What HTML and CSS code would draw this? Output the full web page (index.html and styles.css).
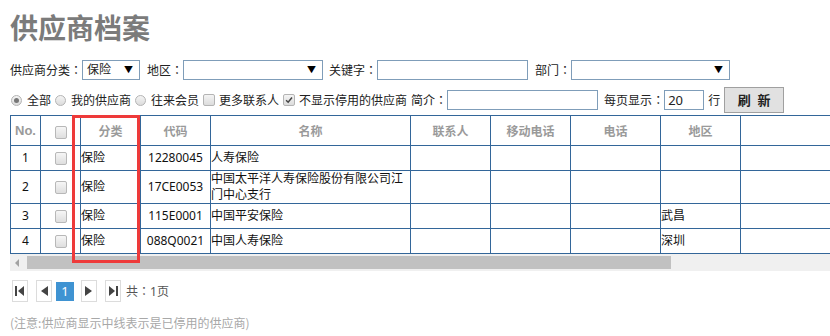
FILE: index.html
```html
<!DOCTYPE html>
<html>
<head>
  <meta charset="utf-8">
  <title>供应商档案</title>
  <link rel="stylesheet" href="styles.css">
</head>
<body>
  <div class="page">
    <h1 class="title">供应商档案</h1>

    <div class="filters">
      <span class="label">供应商分类<span class="colon">：</span></span>
      <span class="select sel-type">保险<i class="arrow">▼</i></span>
      <span class="label">地区<span class="colon">：</span></span>
      <span class="select sel-area"><i class="arrow">▼</i></span>
      <span class="label">关键字<span class="colon">：</span></span>
      <span class="input in-key"></span>
      <span class="label">部门<span class="colon">：</span></span>
      <span class="select sel-dept"><i class="arrow">▼</i></span>
    </div>

    <div class="filters row2">
      <span class="radio on first"></span><span class="opt">全部</span>
      <span class="radio"></span><span class="opt">我的供应商</span>
      <span class="radio"></span><span class="opt">往来会员</span>
      <span class="check"></span><span class="opt">更多联系人</span>
      <span class="check on"><svg viewBox="0 0 12 12" width="12" height="12"><path d="M2.5 6.2 L5 8.6 L9.6 3" fill="none" stroke="#444" stroke-width="1.8"/></svg></span><span class="opt">不显示停用的供应商</span>
      <span class="label">简介<span class="colon">：</span></span>
      <span class="input in-intro"></span>
      <span class="label">每页显示<span class="colon">：</span></span>
      <span class="input in-size">20</span>
      <span class="label">行</span>
      <span class="btn">刷 新</span>
    </div>

    <div class="grid-wrap">
      <div class="grid-scroll">
        <table class="grid">
          <colgroup>
            <col style="width:30px"><col style="width:40px"><col style="width:60px"><col style="width:70px"><col style="width:200px">
            <col style="width:80px"><col style="width:80px"><col style="width:90px"><col style="width:80px"><col style="width:160px">
          </colgroup>
          <tr class="head">
            <th class="no">No.</th>
            <th><span class="box"></span></th>
            <th>分类</th>
            <th>代码</th>
            <th>名称</th>
            <th>联系人</th>
            <th>移动电话</th>
            <th>电话</th>
            <th>地区</th>
            <th></th>
          </tr>
          <tr class="r25">
            <td class="c">1</td><td class="c"><span class="box"></span></td><td>保险</td><td class="c code">12280045</td><td>人寿保险</td><td></td><td></td><td></td><td></td><td></td>
          </tr>
          <tr class="r33">
            <td class="c">2</td><td class="c"><span class="box"></span></td><td>保险</td><td class="c code">17CE0053</td><td>中国太平洋人寿保险股份有限公司江门中心支行</td><td></td><td></td><td></td><td></td><td></td>
          </tr>
          <tr class="r25">
            <td class="c">3</td><td class="c"><span class="box"></span></td><td>保险</td><td class="c code">115E0001</td><td>中国平安保险</td><td></td><td></td><td></td><td>武昌</td><td></td>
          </tr>
          <tr class="r25">
            <td class="c">4</td><td class="c"><span class="box"></span></td><td>保险</td><td class="c code">088Q0021</td><td>中国人寿保险</td><td></td><td></td><td></td><td>深圳</td><td></td>
          </tr>
        </table>
      </div>
      <div class="hscroll">
        <span class="hs-arrow"></span>
        <span class="hs-thumb"></span>
      </div>
      <div class="mark"></div>
    </div>

    <div class="pager">
      <span class="pbtn p-first"><svg viewBox="0 0 14 20" width="14" height="20"><rect x="2" y="5" width="2" height="10" fill="#444"/><path d="M11 5 L5 10 L11 15 Z" fill="#444"/></svg></span>
      <span class="pbtn p-prev"><svg viewBox="0 0 14 20" width="14" height="20"><path d="M11 5 L4 10 L11 15 Z" fill="#444"/></svg></span>
      <span class="pcur">1</span>
      <span class="pbtn p-next"><svg viewBox="0 0 14 20" width="14" height="20"><path d="M3 5 L10 10 L3 15 Z" fill="#444"/></svg></span>
      <span class="pbtn p-last"><svg viewBox="0 0 14 20" width="14" height="20"><path d="M3 5 L9 10 L3 15 Z" fill="#444"/><rect x="10" y="5" width="2" height="10" fill="#444"/></svg></span>
      <span class="ptotal">共<span class="colon">：</span>1页</span>
    </div>

    <p class="note">(注意:供应商显示中线表示是已停用的供应商)</p>
  </div>
</body>
</html>
```

FILE: styles.css
```css
body {
  margin: 0;
  background: #fff;
  font-family: "Noto Sans", "Noto Sans CJK SC", sans-serif;
  font-size: 12px;
  color: #222;
}

.page {
  padding: 9px 0 0 10px;
  width: 820px;
}

.title {
  margin: 0;
  font-family: "Noto Sans CJK SC", sans-serif;
  font-size: 28px;
  line-height: 36px;
  font-weight: bold;
  color: #7b7b7b;
}

.filters {
  display: flex;
  align-items: center;
  height: 20px;
  margin-top: 15px;
  white-space: nowrap;
}

.row2 {
  margin-top: 10px;
}

.colon {
  font-family: "Noto Sans CJK TC", sans-serif;
}

.select,
.input {
  position: relative;
  box-sizing: border-box;
  height: 20px;
  border: 1px solid #7f9db9;
  background: #fff;
  line-height: 18px;
  padding-left: 4px;
  margin-right: 7px;
}

.arrow {
  position: absolute;
  right: 6px;
  top: 0;
  font-style: normal;
  font-size: 9px;
  color: #000;
}

.sel-type { width: 58px; }
.sel-area { width: 140px; margin-right: 6px; }
.in-key { width: 151px; }
.sel-dept { width: 159px; }

.radio {
  box-sizing: border-box;
  width: 11px;
  height: 11px;
  border-radius: 50%;
  border: 1px solid #b4b4b4;
  background: linear-gradient(#f4f4f4, #dcdcdc);
  margin-right: 5px;
  position: relative;
}

.radio.first {
  margin-left: 1px;
}

.radio.on::after {
  content: "";
  position: absolute;
  left: 2px;
  top: 2px;
  width: 5px;
  height: 5px;
  border-radius: 50%;
  background: #777;
}

.check {
  box-sizing: border-box;
  width: 12px;
  height: 12px;
  border: 1px solid #b4b4b4;
  border-radius: 2px;
  background: linear-gradient(#f4f4f4, #dcdcdc);
  margin-right: 4px;
  display: flex;
  align-items: center;
  justify-content: center;
}

.check svg {
  display: block;
}

.opt {
  margin-right: 4px;
}

.in-intro { width: 151px; margin-right: 6px; }
.in-size { width: 40px; margin-right: 4px; padding-left: 3px; font-size: 13px; }

.btn {
  box-sizing: border-box;
  width: 60px;
  height: 26px;
  margin-left: 4px;
  border: 1px solid #a0a0a0;
  background: #e1e1e1;
  text-align: center;
  line-height: 24px;
  font-family: "Noto Sans CJK SC", sans-serif;
  font-size: 13px;
  font-weight: bold;
  word-spacing: 4px;
  color: #222;
}

.grid-wrap {
  position: relative;
  margin-top: 5px;
}

.grid-scroll {
  overflow: hidden;
  width: 820px;
}

.grid {
  border-collapse: collapse;
  table-layout: fixed;
  width: 890px;
}

.grid th,
.grid td {
  border: 1px solid #336699;
  padding: 0;
  overflow: hidden;
}

.grid th {
  color: #9a9a9a;
  font-weight: bold;
  font-family: "Noto Sans CJK SC", sans-serif;
  font-size: 12px;
  text-align: center;
}

.grid th.no {
  font-family: "Liberation Sans", sans-serif;
  font-size: 13px;
}

.head { height: 30px; }
.r25 { height: 25px; }
.r33 { height: 33px; }

.grid td {
  line-height: 16px;
  color: #111;
}

.grid td.c {
  text-align: center;
}

.box {
  display: inline-block;
  vertical-align: middle;
  box-sizing: border-box;
  width: 12px;
  height: 13px;
  border: 1px solid #b8b8b8;
  border-radius: 2px;
  background: linear-gradient(#f6f6f6, #dedede);
}

.hscroll {
  position: relative;
  width: 820px;
  height: 17px;
  background: #f0f0f0;
}

.hs-arrow {
  position: absolute;
  left: 5px;
  top: 5px;
  border-right: 4px solid #a3a3a3;
  border-top: 4px solid transparent;
  border-bottom: 4px solid transparent;
}

.hs-thumb {
  position: absolute;
  left: 17px;
  top: 2px;
  width: 644px;
  height: 13px;
  background: #c1c1c1;
}

.mark {
  position: absolute;
  left: 62px;
  top: 0;
  width: 62px;
  height: 142px;
  border: 3px solid #ee3a3a;
}

.pager {
  display: flex;
  align-items: center;
  margin-top: 9px;
  margin-left: 2px;
  height: 22px;
}

.pbtn {
  box-sizing: border-box;
  width: 16px;
  height: 22px;
  border: 1px solid #dcdcdc;
  display: flex;
  align-items: center;
  justify-content: center;
}

.pbtn svg {
  display: block;
}

.p-first { margin-right: 8px; }
.p-prev { margin-right: 4px; }
.p-next { margin-right: 8px; }
.p-last { margin-right: 5px; }

.pcur {
  width: 18px;
  height: 19px;
  background: #3f93d2;
  color: #fff;
  text-align: center;
  line-height: 19px;
  font-size: 13px;
  margin-right: 7px;
}

.ptotal {
  color: #555;
}

.note {
  margin: 12px 0 0;
  color: #a8a8a8;
  font-family: "Noto Sans CJK SC", sans-serif;
}
```
